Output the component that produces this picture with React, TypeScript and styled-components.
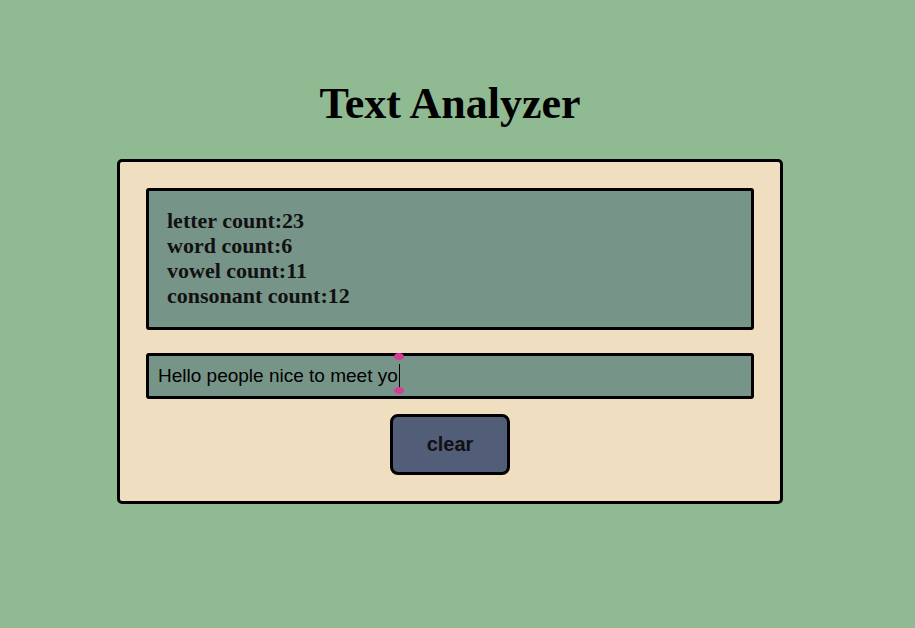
import React, { useState } from "react";
import styled, { createGlobalStyle } from "styled-components";

const GlobalStyle = createGlobalStyle`
  html, body {
    margin: 0;
    padding: 0;
    background: #90ba92;
  }
  body {
    font-family: "Liberation Serif", "Times New Roman", serif;
  }
`;

const Page = styled.div`
  width: 900px;
  padding-top: 80px;
  display: flex;
  flex-direction: column;
  align-items: center;
`;

const Title = styled.h1`
  margin: 0 0 31px 0;
  font-family: "Liberation Serif", "Times New Roman", serif;
  font-size: 44px;
  line-height: 48px;
  font-weight: bold;
  color: #000;
`;

const Card = styled.div`
  box-sizing: border-box;
  width: 666px;
  background: #f0dec0;
  border: 3px solid #000;
  border-radius: 5px;
  padding: 26px;
  display: flex;
  flex-direction: column;
  align-items: center;
`;

const Stats = styled.div`
  box-sizing: border-box;
  width: 100%;
  height: 142px;
  background: #779488;
  border: 3px solid #000;
  border-radius: 3px;
  padding: 17px 18px;
  margin-bottom: 23px;
`;

const StatLine = styled.div`
  font-family: "Liberation Serif", "Times New Roman", serif;
  font-weight: bold;
  font-size: 22px;
  line-height: 25px;
  color: #111;
`;

const InputWrap = styled.div`
  position: relative;
  width: 100%;
  margin-bottom: 15px;
`;

const TextInput = styled.input`
  box-sizing: border-box;
  width: 100%;
  height: 46px;
  background: #779488;
  border: 3px solid #000;
  border-radius: 3px;
  padding: 0 9px;
  font-family: "Liberation Sans", Arial, sans-serif;
  font-size: 19px;
  color: #000;
  outline: none;
`;

const Caret = styled.span`
  position: absolute;
  left: 253px;
  top: 11px;
  width: 1px;
  height: 24px;
  background: #000;
`;

const Handle = styled.span<{ $top: number }>`
  position: absolute;
  left: 248px;
  top: ${(p) => p.$top}px;
  width: 10px;
  height: 7px;
  border-radius: 50%;
  background: #d63c95;
`;

const ClearButton = styled.button`
  box-sizing: border-box;
  width: 120px;
  height: 61px;
  background: #525d78;
  border: 3px solid #000;
  border-radius: 8px;
  font-family: "Liberation Sans", Arial, sans-serif;
  font-weight: bold;
  font-size: 20px;
  color: #111;
  cursor: pointer;
`;

const vowels = "aeiouAEIOU";

export default function App() {
  const [text, setText] = useState("Hello people nice to meet yo");

  const letters = text.replace(/[^a-zA-Z]/g, "");
  const words = text.trim() ? text.trim().split(/\s+/).length : 0;
  const vowelCount = letters.split("").filter((c) => vowels.includes(c)).length;

  return (
    <Page>
      <GlobalStyle />
      <Title>Text Analyzer</Title>
      <Card>
        <Stats>
          <StatLine>letter count:{letters.length}</StatLine>
          <StatLine>word count:{words}</StatLine>
          <StatLine>vowel count:{vowelCount}</StatLine>
          <StatLine>consonant count:{letters.length - vowelCount}</StatLine>
        </Stats>
        <InputWrap>
          <TextInput value={text} onChange={(e) => setText(e.target.value)} />
          <Caret />
          <Handle $top={0} />
          <Handle $top={34} />
        </InputWrap>
        <ClearButton onClick={() => setText("")}>clear</ClearButton>
      </Card>
    </Page>
  );
}
